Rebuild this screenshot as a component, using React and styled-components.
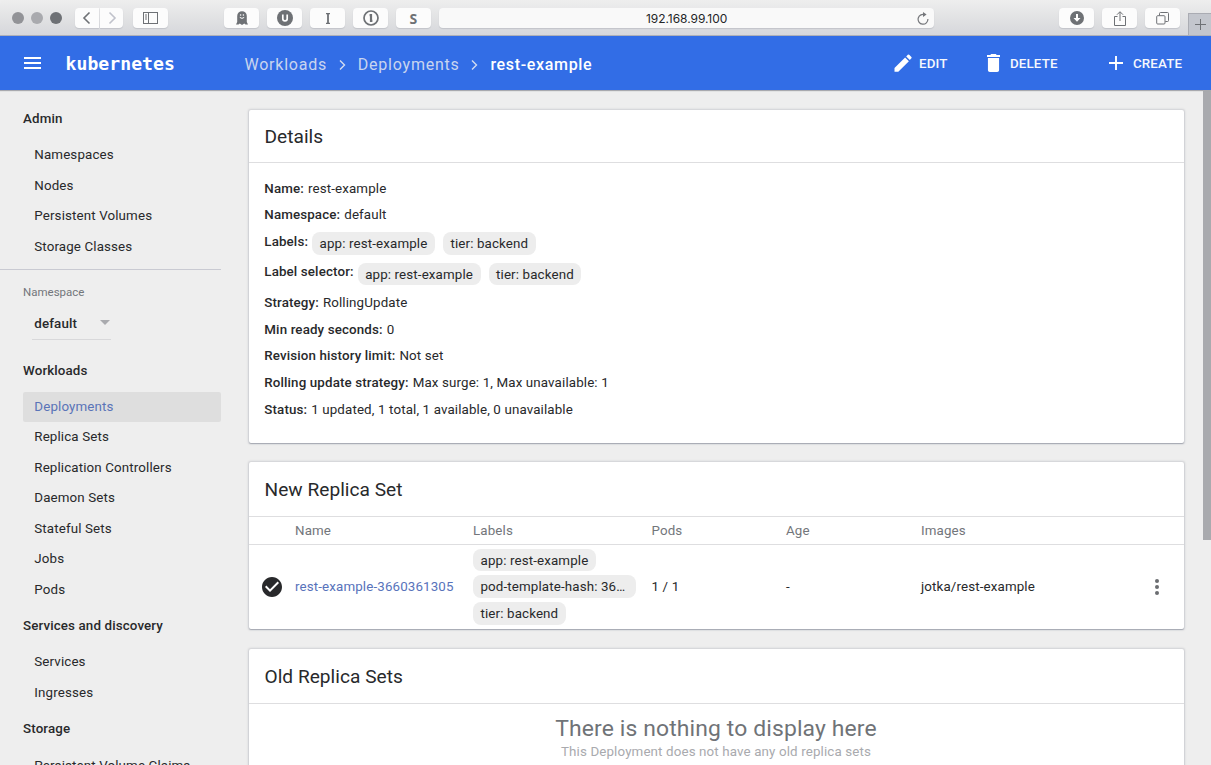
import React from "react";
import styled, { createGlobalStyle } from "styled-components";

const GlobalStyle = createGlobalStyle`
  * { box-sizing: border-box; }
  body { margin: 0; overflow: hidden; }
`;

const Page = styled.div`
  display: flex;
  flex-direction: column;
  width: 1211px;
  height: 765px;
  overflow: hidden;
  background: #eeeeee;
  color: #28292b;
  font-family: Roboto, "Liberation Sans", sans-serif;
  font-size: 13.35px;
  letter-spacing: 0.13px;
  white-space: nowrap;
`;

/* Browser chrome */
const BrowserBar = styled.div`
  display: flex;
  flex: none;
  align-items: flex-start;
  height: 36px;
  padding: 8px 0 0 12px;
  border-bottom: 1px solid #aeb0b8;
  border-radius: 5px 5px 0 0;
  background: linear-gradient(#eeeeee, #dddee0 70%, #d6d7dc);
`;
const Lights = styled.div`
  display: flex;
  gap: 7px;
  width: 63px;
  padding-top: 4px;
`;
const Light = styled.span`
  width: 12px;
  height: 12px;
  border-radius: 50%;
  background: ${(p) => p.$color};
`;
const ChromeButton = styled.div`
  display: flex;
  align-items: center;
  justify-content: center;
  width: ${(p) => p.$width || 35}px;
  height: 20px;
  margin-right: ${(p) => p.$after ?? 8}px;
  border-radius: ${(p) => p.$radius || "4px"};
  background: #fcfcfc;
  box-shadow: 0 1px 1px #c2c4ca;
  color: #6e7175;
  font: bold 14px "Open Sans", "Liberation Sans", sans-serif;
  svg { display: block; }
`;
const AddressBar = styled.div`
  display: flex;
  align-items: center;
  width: 495px;
  height: 20px;
  margin-right: 125px;
  padding: 1px 5px 0 207px;
  border-radius: 4px;
  background: #f9f9f9;
  box-shadow: 0 1px 1px #c2c4ca;
  color: #242628;
  font: 12px "Inter", "Liberation Sans", sans-serif;
  letter-spacing: -0.05px;
  svg { margin-left: auto; }
`;
const NewTab = styled.div`
  display: flex;
  align-items: center;
  justify-content: center;
  width: 23px;
  height: 22px;
  margin: 5px 0 0 auto;
  border: 1px solid #aaacb3;
  border-width: 1px 0 0 1px;
  background: #c3c6cd;
`;

/* Application toolbar */
const Toolbar = styled.header`
  display: flex;
  flex: none;
  align-items: center;
  height: 54px;
  padding-left: 24px;
  background: #326de6;
  color: #ffffff;
  position: relative;
  box-shadow: 0 1px 1px #a8a9ae;
`;
const MenuIcon = styled.svg`
  display: block;
  margin-right: 24.5px;
`;
const Brand = styled.div`
  width: 179px;
  font: bold 18.1px "DejaVu Sans Mono", monospace;
  letter-spacing: 0.05px;
`;
const Breadcrumbs = styled.nav`
  display: flex;
  align-items: center;
  width: 649px;
  padding-top: 3px;
  font-size: 16px;
`;
const Crumb = styled.span`
  color: #c9d5ef;
  letter-spacing: 0.77px;
`;
const CurrentCrumb = styled.span`
  font-weight: 500;
  letter-spacing: 0.67px;
`;
const CrumbArrow = styled.svg`
  margin: 0 12px 0 11.8px;
`;
const Action = styled.div`
  display: flex;
  align-items: center;
  width: ${(p) => p.$width}px;
  color: #f6f8fd;
  font-weight: 500;
  svg { margin-right: ${(p) => p.$gap}px; }
`;

/* Main area */
const Body = styled.div`
  display: flex;
  flex: 1;
  min-height: 0;
`;
const Sidebar = styled.aside`
  width: 249px;
  padding-top: 8px;
  overflow: hidden;
`;
const NavHeading = styled.div`
  height: 42.1px;
  padding-left: 23px;
  font-weight: 500;
  line-height: 42px;
`;
const NavItem = styled.div`
  width: 198px;
  height: 30.53px;
  margin-left: 23px;
  padding-left: 11.3px;
  border-radius: 2px;
  background: ${(p) => (p.$active ? "#dedede" : "transparent")};
  color: ${(p) => (p.$active ? "#5a74b8" : "inherit")};
  line-height: 30.8px;
`;
const NamespacePicker = styled.div`
  width: 221px;
  height: 80.8px;
  margin-top: 6.7px;
  padding: 14px 0 0 23px;
  border-top: 1px solid #c9cad2;
`;
const PickerLabel = styled.div`
  color: #73767b;
  font-size: 11.5px;
  letter-spacing: 0;
  line-height: 16px;
`;
const PickerValue = styled.div`
  display: flex;
  align-items: center;
  justify-content: space-between;
  width: 79px;
  height: 31px;
  margin: 9px 0 0 9px;
  padding: 0 1px 0 2.3px;
  border-bottom: 1px solid #d8d8da;
  font-weight: 500;
  svg { margin-bottom: 2px; }
`;
const Content = styled.main`
  width: 935px;
  padding-top: 20px;
  overflow: hidden;
  box-sizing: content-box;
  padding-right: 3px;
  padding-left: 3px;
  margin: 0 -3px;
`;
const Card = styled.section`
  width: 935px;
  height: ${(p) => p.$height}px;
  margin-bottom: ${(p) => p.$after || 0}px;
  border-radius: 2px;
  background: #ffffff;
  box-shadow: 0 1px 1px #a6a9b2, 0 0 2px 0.5px #cfd0d4;
`;
const CardTitle = styled.h2`
  height: ${(p) => p.$height || 55}px;
  margin: 0;
  padding-left: 15.5px;
  border-bottom: 1px solid #dedee0;
  font-size: 19.1px;
  font-weight: 400;
  letter-spacing: 0.03px;
  line-height: ${(p) => (p.$height ? 54 : 56)}px;
`;
const Details = styled.div`
  padding: 11.6px 0 0 15.3px;
`;
const DetailRow = styled.div`
  display: flex;
  height: ${(p) => (p.$tags ? 30.4 : 26.75)}px;
  line-height: 27px;
  gap: 4px;
`;
const DetailName = styled.span`
  font-weight: 500;
`;
const Tag = styled.span`
  display: block;
  width: fit-content;
  height: 22.5px;
  padding: 0 7.5px;
  border-radius: 8px;
  background: #ededed;
  line-height: 23.4px;
  ${(p) => p.$full && "width: 163px;"}
`;
const TagList = styled.div`
  display: flex;
  gap: 8px;
  padding-top: 4.2px;
`;
const TagStack = styled.div`
  display: flex;
  flex-direction: column;
  gap: 4.2px;
`;
const TableRow = styled.div`
  display: grid;
  grid-template-columns: 33px 178px 178.5px 134.5px 135px 1fr 29.5px;
  align-items: center;
  height: ${(p) => p.$height}px;
  padding-left: 13px;
`;
const TableHead = styled(TableRow)`
  border-bottom: 1px solid #dedee0;
  color: #73767b;
`;
const PodLink = styled.a`
  color: #5873bb;
`;
const Empty = styled.div`
  padding: 11px 1px 0 0;
  color: #707377;
  font-size: 22.9px;
  line-height: 28px;
  text-align: center;
`;
const EmptyNote = styled.div`
  color: #a9aaae;
  font-size: 13.35px;
  line-height: 18px;
`;
const Scrollbar = styled.div`
  width: 8px;
  height: 450px;
  margin-left: auto;
  background: #a9aaae;
`;

const Chevron = ({ left, color }) => (
  <svg width="10" height="14" viewBox="0 0 10 14" fill="none" stroke={color} strokeWidth="1.6">
    <path d={left ? "M7.5 1.5 2 7l5.5 5.5" : "M2.5 1.5 8 7l-5.5 5.5"} />
  </svg>
);

const Separator = () => (
  <CrumbArrow width="7" height="12" viewBox="0 0 7 12" fill="none" stroke="#d3dcf1" strokeWidth="1.4">
    <path d="M1 1.5 5.5 6 1 10.5" />
  </CrumbArrow>
);

const BrowserChrome = () => (
  <BrowserBar>
    <Lights>
      <Light $color="#929397" />
      <Light $color="#a9aaae" />
      <Light $color="#6e7175" />
    </Lights>
    <ChromeButton $width={24} $after={1} $radius="4px 0 0 4px"><Chevron left color="#6e7175" /></ChromeButton>
    <ChromeButton $width={23} $after={10} $radius="0 4px 4px 0"><Chevron color="#c0c2cb" /></ChromeButton>
    <ChromeButton $after={56}>
      <svg width="15" height="12" viewBox="0 0 15 12" fill="none" stroke="#6e7175">
        <rect x=".5" y=".5" width="14" height="11" />
        <path d="M5.5.5v11M2 3h2M2 5h2M2 7h2" />
      </svg>
    </ChromeButton>
    <ChromeButton>
      <svg width="12" height="14" viewBox="0 0 12 14">
        <path d="M1.2 5a4.8 4.8 0 0 1 9.6 0v6L12 13.5H9.5L8.3 12.5 6 14l-2.2-1.5-1.3 1H0L1.2 11Z" fill="#6e7175" />
        <circle cx="4.6" cy="4" r=".8" fill="#fff" />
        <circle cx="7.4" cy="4" r=".8" fill="#fff" />
        <path d="M3.8 6.4q2.2 2 4.4 0" stroke="#fff" fill="none" />
      </svg>
    </ChromeButton>
    <ChromeButton>
      <svg width="16" height="16" viewBox="0 0 16 16">
        <circle cx="8" cy="8" r="8" fill="#6e7175" />
        <path d="M5.8 4.5v4.2a2.2 2.2 0 0 0 4.4 0V4.5" fill="none" stroke="#fff" strokeWidth="1.7" />
      </svg>
    </ChromeButton>
    <ChromeButton>
      <svg width="6" height="11" viewBox="0 0 6 11" fill="none" stroke="#6e7175">
        <path d="M1 .6h4M1 10.4h4" strokeWidth="1.2" />
        <path d="M3 0v11" strokeWidth="1.8" />
      </svg>
    </ChromeButton>
    <ChromeButton>
      <svg width="16" height="16" viewBox="0 0 16 16" fill="none" stroke="#6e7175">
        <circle cx="8" cy="8" r="7" strokeWidth="1.7" />
        <path d="M8 4v8M6.6 5.1H8M8 10.9h1.4" strokeWidth="2.2" />
      </svg>
    </ChromeButton>
    <ChromeButton>S</ChromeButton>
    <AddressBar>
      192.168.99.100
      <svg width="12" height="13" viewBox="0 0 12 13" fill="none" stroke="#75777b">
        <path d="M8 2.8A4.9 4.9 0 1 0 10.9 7" strokeWidth="1.2" />
        <path d="M6 0v5l3.6-2.4Z" fill="#75777b" stroke="none" />
      </svg>
    </AddressBar>
    <ChromeButton>
      <svg width="14" height="14" viewBox="0 0 14 14">
        <circle cx="7" cy="7" r="7" fill="#6e7175" />
        <path d="M6 3h2v4h2.5L7 10.8 3.5 7H6Z" fill="#fff" />
      </svg>
    </ChromeButton>
    <ChromeButton>
      <svg width="12" height="15" viewBox="0 0 12 15" fill="none" stroke="#6e7175">
        <path d="M3.5 5.5H.5v9h11v-9h-3M6 10V1M3 3.7l3-3 3 3" />
      </svg>
    </ChromeButton>
    <ChromeButton $after={0}>
      <svg width="13" height="13" viewBox="0 0 13 13" fill="none" stroke="#6e7175">
        <rect x=".7" y="3.7" width="8.3" height="8.3" rx="1" />
        <path d="M3.5 3.5V1.5q0-1 1-1H11.5q1 0 1 1V8.5q0 1-1 1H9.3" />
      </svg>
    </ChromeButton>
    <NewTab>
      <svg width="11" height="11" viewBox="0 0 11 11" stroke="#6e7175"><path d="M5.5 0v11M0 5.5h11" /></svg>
    </NewTab>
  </BrowserBar>
);

const NavGroup = ({ title, items, active }) => (
  <>
    <NavHeading>{title}</NavHeading>
    {items.map((item) => (
      <NavItem key={item} $active={item === active}>{item}</NavItem>
    ))}
  </>
);

const Detail = ({ name, children, tags }) => (
  <DetailRow $tags={tags}>
    <DetailName>{name}:</DetailName>
    {tags ? <TagList>{tags.map((t) => <Tag key={t}>{t}</Tag>)}</TagList> : <span>{children}</span>}
  </DetailRow>
);

const appTags = ["app: rest-example", "tier: backend"];

export default function App() {
  return (
    <Page>
      <GlobalStyle />
      <BrowserChrome />
      <Toolbar>
        <MenuIcon width="17" height="12" viewBox="0 0 17 12" fill="#fff">
          <path d="M0 0h17v2H0zM0 5h17v2H0zM0 10h17v2H0z" />
        </MenuIcon>
        <Brand>kubernetes</Brand>
        <Breadcrumbs>
          <Crumb>Workloads</Crumb>
          <Separator />
          <Crumb>Deployments</Crumb>
          <Separator />
          <CurrentCrumb>rest-example</CurrentCrumb>
        </Breadcrumbs>
        <Action $width={93} $gap={7.5}>
          <svg width="18" height="18" viewBox="0 0 18 18" fill="#fff">
            <path d="M.5 17.8V14L11.1 3.4l3.8 3.8L4.3 17.8ZM12.2 2.4 13.8.7q.7-.6 1.4 0l2.2 2.2q.6.7 0 1.4l-1.6 1.7Z" />
          </svg>
          EDIT
        </Action>
        <Action $width={122} $gap={10.5}>
          <svg width="13" height="18" viewBox="5 3 14 18" preserveAspectRatio="none" fill="#fff">
            <path d="M6 19c0 1.1.9 2 2 2h8c1.1 0 2-.9 2-2V7H6v12zM19 4h-3.5l-1-1h-5l-1 1H5v2h14V4z" />
          </svg>
          DELETE
        </Action>
        <Action $gap={10.5} $width={80}>
          <svg width="14" height="14" viewBox="0 0 14 14" stroke="#fff" strokeWidth="1.9"><path d="M7 0v14M0 7h14" /></svg>
          CREATE
        </Action>
      </Toolbar>
      <Body>
        <Sidebar>
          <NavGroup title="Admin" items={["Namespaces", "Nodes", "Persistent Volumes", "Storage Classes"]} />
          <NamespacePicker>
            <PickerLabel>Namespace</PickerLabel>
            <PickerValue>
              default
              <svg width="10" height="5" viewBox="0 0 10 5" fill="#a9aaae"><path d="M0 0h10L5 5Z" /></svg>
            </PickerValue>
          </NamespacePicker>
          <NavGroup
            title="Workloads"
            active="Deployments"
            items={["Deployments", "Replica Sets", "Replication Controllers", "Daemon Sets", "Stateful Sets", "Jobs", "Pods"]}
          />
          <NavGroup title="Services and discovery" items={["Services", "Ingresses"]} />
          <NavGroup title="Storage" items={["Persistent Volume Claims"]} />
        </Sidebar>
        <Content>
          <Card $height={332.5} $after={19.5}>
            <CardTitle $height={53}>Details</CardTitle>
            <Details>
              <Detail name="Name">rest-example</Detail>
              <Detail name="Namespace">default</Detail>
              <Detail name="Labels" tags={appTags} />
              <Detail name="Label selector" tags={appTags} />
              <Detail name="Strategy">RollingUpdate</Detail>
              <Detail name="Min ready seconds">0</Detail>
              <Detail name="Revision history limit">Not set</Detail>
              <Detail name="Rolling update strategy">Max surge: 1, Max unavailable: 1</Detail>
              <Detail name="Status">1 updated, 1 total, 1 available, 0 unavailable</Detail>
            </Details>
          </Card>
          <Card $height={167} $after={20}>
            <CardTitle>New Replica Set</CardTitle>
            <TableHead $height={28}>
              <span />
              <span>Name</span>
              <span>Labels</span>
              <span>Pods</span>
              <span>Age</span>
              <span>Images</span>
            </TableHead>
            <TableRow $height={83.4}>
              <svg width="20" height="20" viewBox="2 2 20 20" fill="#28292b">
                <path d="M12 2C6.48 2 2 6.48 2 12s4.48 10 10 10 10-4.48 10-10S17.52 2 12 2zm-2 15l-5-5 1.41-1.41L10 14.17l7.59-7.59L19 8l-9 9z" />
              </svg>
              <PodLink>rest-example-3660361305</PodLink>
              <TagStack>
                <Tag>app: rest-example</Tag>
                <Tag $full>pod-template-hash: 36…</Tag>
                <Tag>tier: backend</Tag>
              </TagStack>
              <span>1 / 1</span>
              <span>-</span>
              <span>jotka/rest-example</span>
              <svg width="4" height="16" viewBox="0 0 4 16" fill="#6b6d71">
                <circle cx="2" cy="2" r="2" /><circle cx="2" cy="8" r="2" /><circle cx="2" cy="14" r="2" />
              </svg>
            </TableRow>
          </Card>
          <Card $height={140}>
            <CardTitle>Old Replica Sets</CardTitle>
            <Empty>
              There is nothing to display here
              <EmptyNote>This Deployment does not have any old replica sets</EmptyNote>
            </Empty>
          </Card>
        </Content>
        <Scrollbar />
      </Body>
    </Page>
  );
}
